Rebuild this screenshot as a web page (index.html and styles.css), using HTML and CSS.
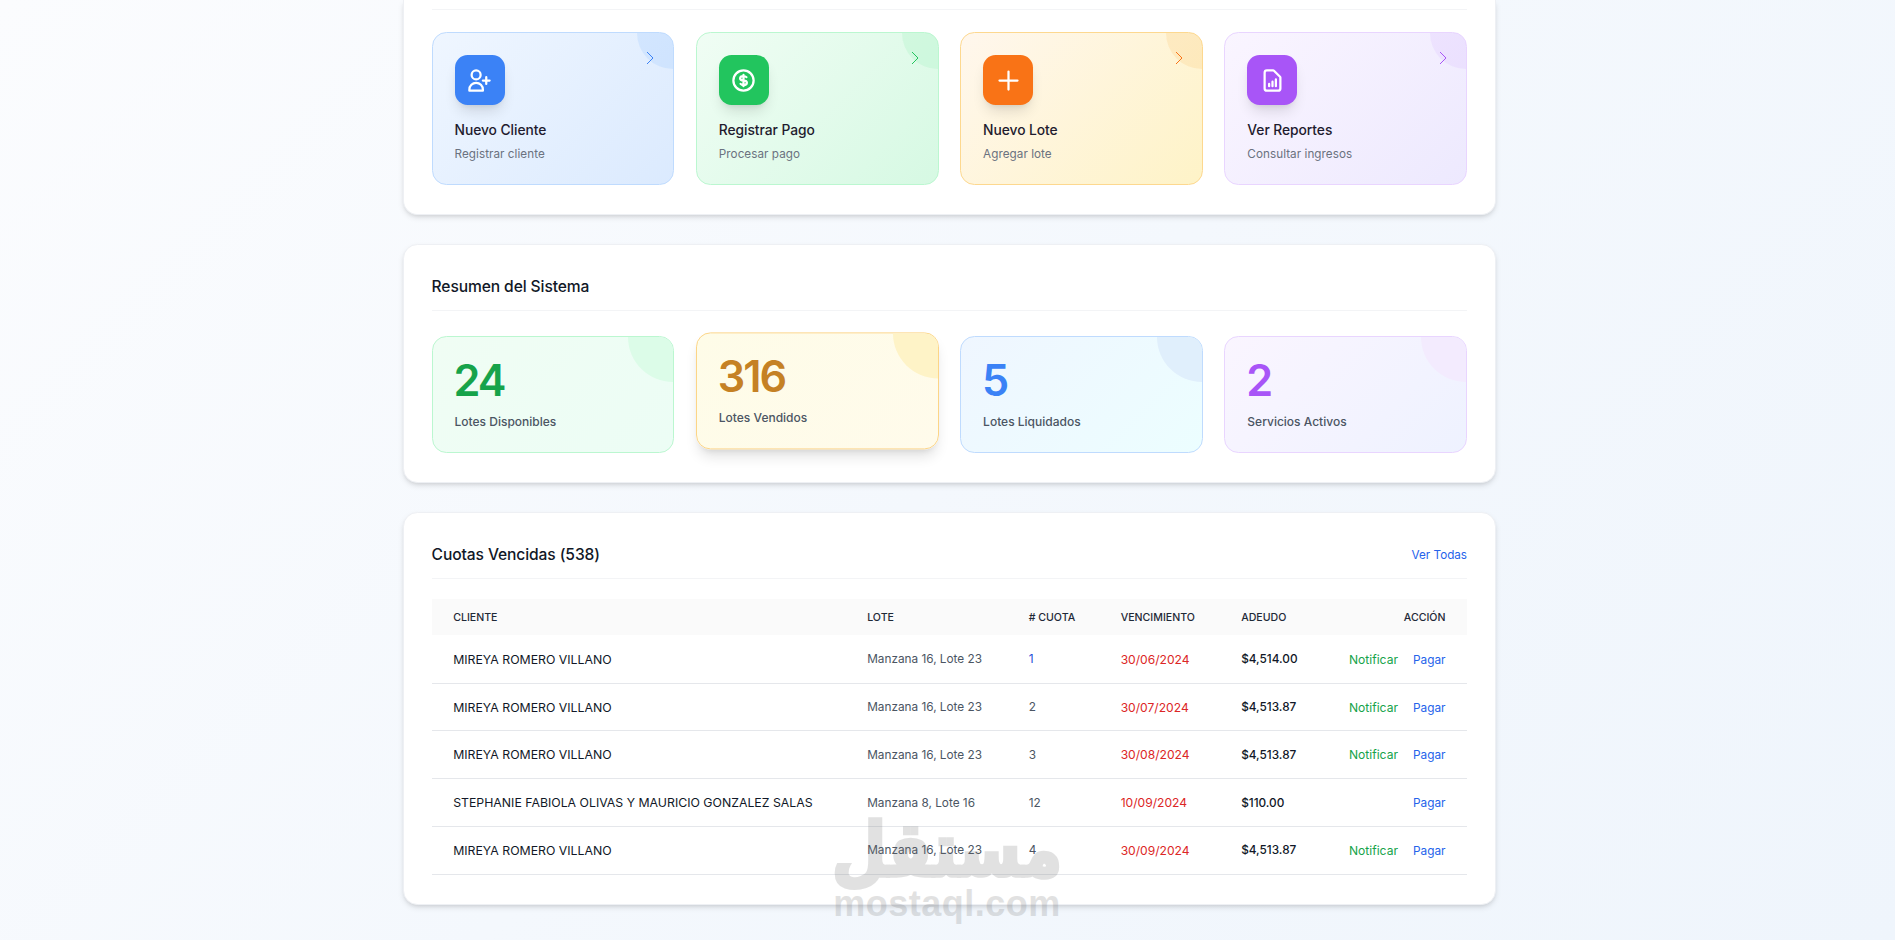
FILE: index.html
```html
<!DOCTYPE html>
<html lang="es">
<head>
<meta charset="utf-8">
<title>Panel</title>
<link rel="stylesheet" href="styles.css">
</head>
<body>
<main class="page">
  <section class="panel panel-clipped">
    <div class="clipped-head"></div>
    <div class="grid actions">
      <a class="action blue">
        <span class="corner"></span>
        <svg class="chev" viewBox="0 0 24 24"><path d="M9 6l6 6-6 6"/></svg>
        <span class="ico"><svg viewBox="0 0 24 24"><path d="M18 9v3m0 0v3m0-3h3m-3 0h-3m-2-5a4 4 0 11-8 0 4 4 0 018 0zM3 20a6 6 0 0112 0v1H3v-1z"/></svg></span>
        <h3>Nuevo Cliente</h3>
        <p>Registrar cliente</p>
      </a>
      <a class="action green">
        <span class="corner"></span>
        <svg class="chev" viewBox="0 0 24 24"><path d="M9 6l6 6-6 6"/></svg>
        <span class="ico"><svg viewBox="0 0 24 24"><path d="M12 8c-1.657 0-3 .895-3 2s1.343 2 3 2 3 .895 3 2-1.343 2-3 2m0-8c1.11 0 2.08.402 2.599 1M12 8V7m0 1v8m0 0v1m0-1c-1.11 0-2.08-.402-2.599-1M21 12a9 9 0 11-18 0 9 9 0 0118 0z"/></svg></span>
        <h3>Registrar Pago</h3>
        <p>Procesar pago</p>
      </a>
      <a class="action orange">
        <span class="corner"></span>
        <svg class="chev" viewBox="0 0 24 24"><path d="M9 6l6 6-6 6"/></svg>
        <span class="ico"><svg viewBox="0 0 24 24"><path d="M12 4v16m8-8H4"/></svg></span>
        <h3>Nuevo Lote</h3>
        <p>Agregar lote</p>
      </a>
      <a class="action purple">
        <span class="corner"></span>
        <svg class="chev" viewBox="0 0 24 24"><path d="M9 6l6 6-6 6"/></svg>
        <span class="ico"><svg viewBox="0 0 24 24"><path d="M9 17v-2m3 2v-4m3 4v-6m2 10H7a2 2 0 01-2-2V5a2 2 0 012-2h5.586a1 1 0 01.707.293l5.414 5.414a1 1 0 01.293.707V19a2 2 0 01-2 2z"/></svg></span>
        <h3>Ver Reportes</h3>
        <p>Consultar ingresos</p>
      </a>
    </div>
  </section>

  <section class="panel">
    <header class="panel-head"><h2>Resumen del Sistema</h2></header>
    <div class="grid stats">
      <div class="stat s-green"><span class="corner"></span><strong>24</strong><span class="lbl">Lotes Disponibles</span></div>
      <div class="stat s-amber lifted"><span class="corner"></span><strong>316</strong><span class="lbl">Lotes Vendidos</span></div>
      <div class="stat s-blue"><span class="corner"></span><strong>5</strong><span class="lbl">Lotes Liquidados</span></div>
      <div class="stat s-purple"><span class="corner"></span><strong>2</strong><span class="lbl">Servicios Activos</span></div>
    </div>
  </section>

  <section class="panel">
    <header class="panel-head"><h2>Cuotas Vencidas (538)</h2><a class="see-all">Ver Todas</a></header>
    <table class="dues">
      <colgroup><col class="c1"><col class="c2"><col class="c3"><col class="c4"><col class="c5"><col class="c6"></colgroup>
      <thead>
        <tr><th>CLIENTE</th><th>LOTE</th><th># CUOTA</th><th>VENCIMIENTO</th><th>ADEUDO</th><th class="right">ACCIÓN</th></tr>
      </thead>
      <tbody>
        <tr><td class="name">MIREYA ROMERO VILLANO</td><td>Manzana 16, Lote 23</td><td class="blue-num">1</td><td class="late">30/06/2024</td><td class="amt">$4,514.00</td><td class="right"><a class="notify">Notificar</a><a class="pay">Pagar</a></td></tr>
        <tr><td class="name">MIREYA ROMERO VILLANO</td><td>Manzana 16, Lote 23</td><td>2</td><td class="late">30/07/2024</td><td class="amt">$4,513.87</td><td class="right"><a class="notify">Notificar</a><a class="pay">Pagar</a></td></tr>
        <tr><td class="name">MIREYA ROMERO VILLANO</td><td>Manzana 16, Lote 23</td><td>3</td><td class="late">30/08/2024</td><td class="amt">$4,513.87</td><td class="right"><a class="notify">Notificar</a><a class="pay">Pagar</a></td></tr>
        <tr><td class="name">STEPHANIE FABIOLA OLIVAS Y MAURICIO GONZALEZ SALAS</td><td>Manzana 8, Lote 16</td><td>12</td><td class="late">10/09/2024</td><td class="amt">$110.00</td><td class="right"><a class="pay">Pagar</a></td></tr>
        <tr><td class="name">MIREYA ROMERO VILLANO</td><td>Manzana 16, Lote 23</td><td>4</td><td class="late">30/09/2024</td><td class="amt">$4,513.87</td><td class="right"><a class="notify">Notificar</a><a class="pay">Pagar</a></td></tr>
      </tbody>
    </table>
  </section>
</main>
<div class="watermark"><span class="wm-ar" lang="ar" dir="rtl">مستقل</span><span class="wm-en">mostaql.com</span></div>
</body>
</html>
```

FILE: styles.css
```css
* { box-sizing: border-box; }
html, body { margin: 0; height: 100%; }
body {
  font-family: "Inter", "Liberation Sans", sans-serif;
  color: #111827;
  background: linear-gradient(135deg, #fbfcfe 0%, #f4f8fd 50%, #eff5fc 100%);
  overflow: hidden;
  position: relative;
  padding-left: 3.6px;
}
.page {
  width: 1093.5px;
  margin: 0 auto;
  display: flex;
  flex-direction: column;
  gap: 29px;
}
.panel {
  background: #fff;
  border-radius: 14.4px;
  border: 1px solid #eef0f4;
  padding: 0 28px 29px;
  box-shadow: 0 3px 6px -1px rgba(0, 0, 0, .13), 0 2px 4px -2px rgba(0, 0, 0, .1);
}
.panel-clipped { border-top: 0; border-radius: 0 0 14.4px 14.4px; height: 215px; }
.clipped-head { height: 10px; border-bottom: 1px solid #f3f4f6; }
.panel-head {
  display: flex;
  justify-content: space-between;
  align-items: center;
  height: 66px;
  padding-top: 18px;
  border-bottom: 1px solid #f3f4f6;
}
.panel-head h2 {
  margin: 0;
  font-size: 15.6px;
  font-weight: 500;
  letter-spacing: -.1px;
  color: #111827;
}
.see-all { font-size: 11.7px; color: #2563eb; }
.grid {
  display: grid;
  grid-template-columns: repeat(4, 1fr);
  gap: 21.6px;
}
.actions { margin-top: 22px; }
.stats { margin-top: 25px; }

.corner {
  position: absolute;
  top: 0; right: 0;
  border-radius: 50%;
  transform: translate(50%, -50%);
}
.action {
  position: relative;
  overflow: hidden;
  display: block;
  height: 153px;
  padding: 22px;
  border-radius: 14.4px;
  border: 1px solid;
}
.action .corner { width: 72px; height: 72px; }
.chev {
  position: absolute;
  top: 13px; right: 11px;
  width: 24px; height: 24px;
  fill: none;
  stroke: currentColor;
  stroke-width: 1;
}
.ico {
  display: flex;
  align-items: center;
  justify-content: center;
  width: 50px; height: 50px;
  border-radius: 12.6px;
  box-shadow: 0 9px 14px -3px rgba(0, 0, 0, .12), 0 4px 6px -4px rgba(0, 0, 0, .1);
}
.ico svg {
  width: 27px; height: 27px;
  fill: none;
  stroke: #fff;
  stroke-width: 2;
  stroke-linecap: round;
  stroke-linejoin: round;
}
.action h3 {
  margin: 15px 0 0;
  font-size: 13.8px;
  line-height: 20px;
  font-weight: 500;
  letter-spacing: -.05px;
  color: #1f1b2e;
}
.action p {
  margin: 6px 0 0;
  font-size: 11.7px;
  line-height: 16px;
  letter-spacing: .05px;
  color: #6b7280;
}
.blue { background: linear-gradient(135deg, #eff6ff, #dbeafe); border-color: #bfdbfe; }
.blue .corner { background: rgba(147, 197, 253, .22); }
.blue .chev { color: #3b82f6; }
.blue .ico { background: #3b82f6; }
.green { background: linear-gradient(135deg, #f0fdf4, #d6f9e3); border-color: #bbf7d0; }
.green .corner { background: rgba(134, 239, 172, .18); }
.green .chev { color: #22c55e; }
.green .ico { background: #22c55e; }
.orange { background: linear-gradient(135deg, #fff7ed, #fef3c7); border-color: #fdd88f; }
.orange .corner { background: rgba(251, 191, 100, .2); }
.orange .chev { color: #f97316; }
.orange .ico { background: #f97316; }
.purple { background: linear-gradient(135deg, #faf5ff, #ede9fe); border-color: #e9d5ff; }
.purple .corner { background: rgba(216, 180, 254, .2); }
.purple .chev { color: #a855f7; }
.purple .ico { background: #a855f7; }

.stat {
  position: relative;
  overflow: hidden;
  display: flex;
  flex-direction: column;
  height: 117px;
  padding: 22px;
  border-radius: 14.4px;
  border: 1px solid;
}
.stat .corner { width: 90px; height: 90px; }
.stat strong {
  margin-left: -1px;
  font-size: 43.2px;
  line-height: 43px;
  font-weight: 600;
  letter-spacing: -2px;
}
.lbl {
  margin-top: 12px;
  font-size: 12px;
  line-height: 16px;
  font-weight: 500;
  color: #4b5563;
}
.lifted {
  transform: translateY(-3.6px);
  box-shadow: 0 9px 14px -3px rgba(0, 0, 0, .12), 0 4px 6px -4px rgba(0, 0, 0, .1);
}
.s-green { background: linear-gradient(135deg, #f0fdf4, #ecfdf5); border-color: #bbf7d0; }
.s-green .corner { background: #dcfce8; }
.s-green strong { color: #16a34a; }
.s-amber { background: linear-gradient(135deg, #fefce8, #fffbeb); border-color: #fcd587; border-width: 1.5px; }
.s-amber .corner { background: #fef3c7; }
.s-amber strong { color: #c58124; }
.s-blue { background: linear-gradient(135deg, #eff6ff, #ecfeff); border-color: #bfdbfe; }
.s-blue .corner { background: #e0effc; }
.s-blue strong { color: #3b82f6; }
.s-purple { background: linear-gradient(135deg, #faf5ff, #eef2ff); border-color: #e9d5ff; }
.s-purple .corner { background: #f3ebfe; }
.s-purple strong { color: #a855f7; }

.dues {
  width: 100%;
  margin-top: 20px;
  border-collapse: collapse;
  table-layout: fixed;
  font-size: 11.8px;
}
.c1 { width: 414px; }
.c2 { width: 161.5px; }
.c3 { width: 92px; }
.c4 { width: 120.5px; }
.c5 { width: 107px; }
.dues th {
  height: 36.4px;
  padding: 0 21.6px;
  background: #fafafa;
  font-size: 10.6px;
  font-weight: 500;
  text-align: left;
  color: #1f2937;
}
.dues td {
  height: 47.8px;
  padding: 0 21.6px;
  border-bottom: 1px solid #e5e7eb;
  color: #4b5563;
}
.dues .right { text-align: right; white-space: nowrap; }
.dues td.name { color: #111827; font-size: 12.3px; white-space: nowrap; }
.dues td.late { color: #dc2626; font-size: 12.1px; }
.dues td.amt { color: #111827; font-weight: 500; }
.dues td.blue-num { color: #1d4ed8; }
.notify { color: #16a34a; font-size: 12.1px; }
.pay { color: #2563eb; margin-left: 15px; }

.watermark {
  position: absolute;
  left: 833px;
  top: 806px;
  width: 228px;
  display: flex;
  flex-direction: column;
  align-items: center;
  pointer-events: none;
  opacity: .2;
  color: #6e6e6e;
  font-family: "DejaVu Sans", sans-serif;
  font-weight: 700;
}
.wm-ar { font-size: 63px; line-height: 80px; -webkit-text-stroke: 3px #6e6e6e; transform: translateY(5px) scaleY(1.2); }
.wm-en { font-size: 36px; line-height: 36px; letter-spacing: .5px; font-family: "Liberation Sans", sans-serif; }
```
